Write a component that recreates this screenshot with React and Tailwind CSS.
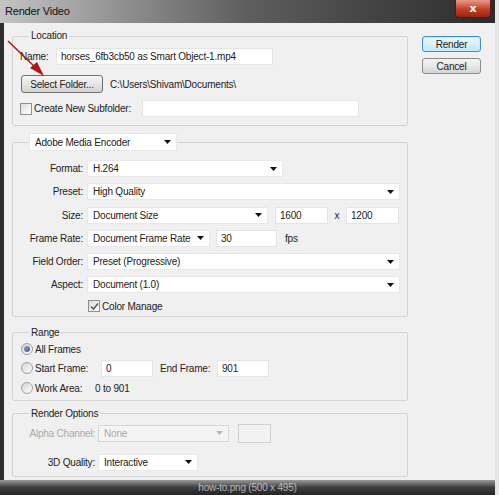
const font = { fontFamily: '"Liberation Sans", Arial, sans-serif', letterSpacing: '-0.2px' };

function Caret({ disabled }) {
  return (
    <svg width="7" height="4" viewBox="0 0 7 4" className="shrink-0">
      <path d="M0 0 H7 L3.5 4 Z" fill={disabled ? '#b8b8b8' : '#111'} />
    </svg>
  );
}

function Field({ w, value, className = '' }) {
  return (
    <div
      className={`h-[17px] bg-white border border-[#e4e4e4] px-[4px] leading-[15px] text-[#222] whitespace-nowrap overflow-hidden shrink-0 ${className}`}
      style={{ width: w }}
    >
      {value}
    </div>
  );
}

function Select({ w, value, disabled, tall }) {
  return (
    <div
      className={`flex items-center justify-between pl-[5px] pr-[5px] border shrink-0 ${tall ? 'h-[18px]' : 'h-[17px]'} ${
        disabled ? 'bg-[#f4f4f4] border-[#d6d6d6] text-[#a9a9a9]' : 'bg-white border-[#e8e8e8] text-[#222]'
      }`}
      style={{ width: w }}
    >
      <span className="whitespace-nowrap">{value}</span>
      <Caret disabled={disabled} />
    </div>
  );
}

function Checkbox({ checked }) {
  return (
    <div className="w-[12px] h-[12px] border border-[#8e8f8f] bg-gradient-to-br from-[#dcdcdc] to-white flex items-center justify-center shrink-0">
      {checked && (
        <svg width="9" height="9" viewBox="0 0 9 9">
          <path d="M1 4.5 L3.5 7 L8 1.5" stroke="#4a5f78" strokeWidth="1.6" fill="none" />
        </svg>
      )}
    </div>
  );
}

function Radio({ checked }) {
  return (
    <div className="w-[12px] h-[12px] rounded-full border border-[#a0a0a0] bg-gradient-to-br from-[#d4d4d4] to-white flex items-center justify-center shrink-0">
      {checked && <div className="w-[6px] h-[6px] rounded-full bg-gradient-to-br from-[#8aa6c6] to-[#3a5f8e]" />}
    </div>
  );
}

function Label({ children }) {
  return <div className="w-[71px] text-right pr-[4px] shrink-0 whitespace-nowrap">{children}</div>;
}

function Group({ legend, children, className = '' }) {
  return (
    <fieldset className={`w-[396px] border border-[#d3d3d3] rounded-[2px] p-0 m-0 ${className}`}>
      {typeof legend === 'string' ? (
        <legend className="ml-[16px] px-[2px] leading-[14px] text-[#222]">{legend}</legend>
      ) : (
        <legend className="ml-[15px] px-[1px] bg-[#f0f0f0]">{legend}</legend>
      )}
      {children}
    </fieldset>
  );
}

export default function App() {
  return (
    <div className="w-[499px] h-[495px] bg-[#e6e6e6] relative overflow-hidden text-[10px] text-[#222]" style={font}>
      <div className="w-[495px] h-[495px] bg-[#2f2f2f] flex flex-col">
        {/* title bar */}
        <div className="h-[23px] shrink-0 bg-gradient-to-r from-[#c4c4c4] via-[#5e5e5e] to-[#2c2c2c] flex items-start justify-between pl-[5px]">
          <div className="text-[11px] text-[#111] leading-[20px] pt-[1px]">Render Video</div>
          <div className="mr-[4px] w-[36px] h-[18px] rounded-b-[4px] border border-[#5a1a14] border-t-0 bg-gradient-to-b from-[#e89a88] via-[#c7422c] to-[#9a2414] flex items-center justify-center">
            <span className="text-white font-bold text-[11px] leading-none" style={{ fontFamily: '"DejaVu Sans", sans-serif' }}>x</span>
          </div>
        </div>

        {/* body */}
        <div className="flex flex-1 min-h-0 pl-[4px]">
          <div className="flex-1 bg-[#f0f0f0] flex pl-[8px] pt-[6px]">
            <div className="flex flex-col">
              <Group legend="Location">
                <div className="pt-[5px] pb-[8px] pl-[7px] flex flex-col">
                  <div className="h-[17px] flex items-center">
                    <span className="w-[36px]">Name:</span>
                    <Field w={217} value="horses_6fb3cb50 as Smart Object-1.mp4" />
                  </div>
                  <div className="h-[18px] mt-[10px] flex items-center">
                    <div className="ml-[1px] w-[82px] h-[18px] border border-[#707070] rounded-[3px] bg-gradient-to-b from-[#f6f6f6] via-[#e6e6e6] to-[#d2d2d2] flex items-center justify-center">
                      Select Folder...
                    </div>
                    <span className="ml-[7px]">C:\Users\Shivam\Documents\</span>
                  </div>
                  <div className="h-[17px] mt-[7px] flex items-center">
                    <Checkbox />
                    <span className="ml-[2px] w-[108px] text-[#222]">Create New Subfolder:</span>
                    <Field w={217} value="" />
                  </div>
                </div>
              </Group>

              <Group className="mt-[7px] w-[395px]" legend={<Select w={148} value="Adobe Media Encoder" tall />}>
                <div className="pt-[9px] pb-[3px] pl-[3px] flex flex-col gap-[6.3px]">
                  <div className="flex items-center h-[17px]">
                    <Label>Format:</Label>
                    <Select w={196} value="H.264" />
                  </div>
                  <div className="flex items-center h-[17px]">
                    <Label>Preset:</Label>
                    <Select w={313} value="High Quality" />
                  </div>
                  <div className="flex items-center h-[17px]">
                    <Label>Size:</Label>
                    <Select w={181} value="Document Size" />
                    <Field w={53} value="1600" className="ml-[7px]" />
                    <span className="w-[18px] text-center">x</span>
                    <Field w={53} value="1200" />
                  </div>
                  <div className="flex items-center h-[17px]">
                    <Label>Frame Rate:</Label>
                    <Select w={123} value="Document Frame Rate" />
                    <Field w={61} value="30" className="ml-[6px]" />
                    <span className="ml-[8px]">fps</span>
                  </div>
                  <div className="flex items-center h-[17px]">
                    <Label>Field Order:</Label>
                    <Select w={313} value="Preset (Progressive)" />
                  </div>
                  <div className="flex items-center h-[17px]">
                    <Label>Aspect:</Label>
                    <Select w={313} value="Document (1.0)" />
                  </div>
                  <div className="flex items-center h-[13px] pl-[72px]">
                    <Checkbox checked />
                    <span className="ml-[2px]">Color Manage</span>
                  </div>
                </div>
              </Group>

              <Group legend="Range" className="mt-[9px]">
                <div className="pt-[1px] pb-[3px] pl-[8px] flex flex-col">
                  <div className="h-[17px] flex items-center">
                    <Radio checked />
                    <span className="ml-[2px]">All Frames</span>
                  </div>
                  <div className="h-[17px] mt-[2px] flex items-center">
                    <Radio />
                    <span className="ml-[2px] w-[66px]">Start Frame:</span>
                    <Field w={52} value="0" />
                    <span className="ml-[7px] w-[57px]">End Frame:</span>
                    <Field w={52} value="901" />
                  </div>
                  <div className="h-[17px] mt-[3px] flex items-center">
                    <Radio />
                    <span className="ml-[2px] w-[60px]">Work Area:</span>
                    <span>0 to 901</span>
                  </div>
                </div>
              </Group>

              <Group legend="Render Options" className="mt-[6px]">
                <div className="pt-[4px] pb-[5px] flex flex-col">
                  <div className="h-[17px] flex items-center">
                    <div className="w-[85px] text-right pr-[3px] text-[#aaaaaa]">Alpha Channel:</div>
                    <Select w={131} value="None" disabled />
                    <div className="ml-[9px] w-[33px] h-[19px] border border-[#cfcfcf] bg-[#f2f2f2]" />
                  </div>
                  <div className="h-[17px] mt-[12px] flex items-center">
                    <div className="w-[85px] text-right pr-[3px]">3D Quality:</div>
                    <Select w={100} value="Interactive" />
                  </div>
                </div>
              </Group>
            </div>

            <div className="ml-[14px] pt-[7px] flex flex-col">
              <div className="w-[59px] h-[16px] rounded-[3px] border border-[#3c8fc4] bg-gradient-to-b from-[#eaf6fd] via-[#d9f0fc] to-[#bee6fd] flex items-center justify-center shadow-[inset_0_0_0_1px_#c8eafc]">
                Render
              </div>
              <div className="w-[59px] h-[16px] mt-[6px] rounded-[3px] border border-[#8a8a8a] bg-gradient-to-b from-[#f4f4f4] via-[#e8e8e8] to-[#d4d4d4] flex items-center justify-center">
                Cancel
              </div>
            </div>
          </div>
        </div>

        {/* bottom frame */}
        <div className="h-[15px] shrink-0 bg-gradient-to-b from-[#9a9a9a] via-[#3e3e3e] to-[#242424] flex items-center justify-center">
          <span className="text-white/60 text-[10px] leading-none">how-to.png (500 x 495)</span>
        </div>
      </div>

      {/* red annotation arrow */}
      <svg className="absolute left-0 top-0 pointer-events-none" width="60" height="90" viewBox="0 0 60 90">
        <line x1="8" y1="41" x2="38" y2="70" stroke="#b01818" strokeWidth="1.5" />
        <path d="M44 76 L30 68 L37 62 Z" fill="#b01818" />
      </svg>
    </div>
  );
}
